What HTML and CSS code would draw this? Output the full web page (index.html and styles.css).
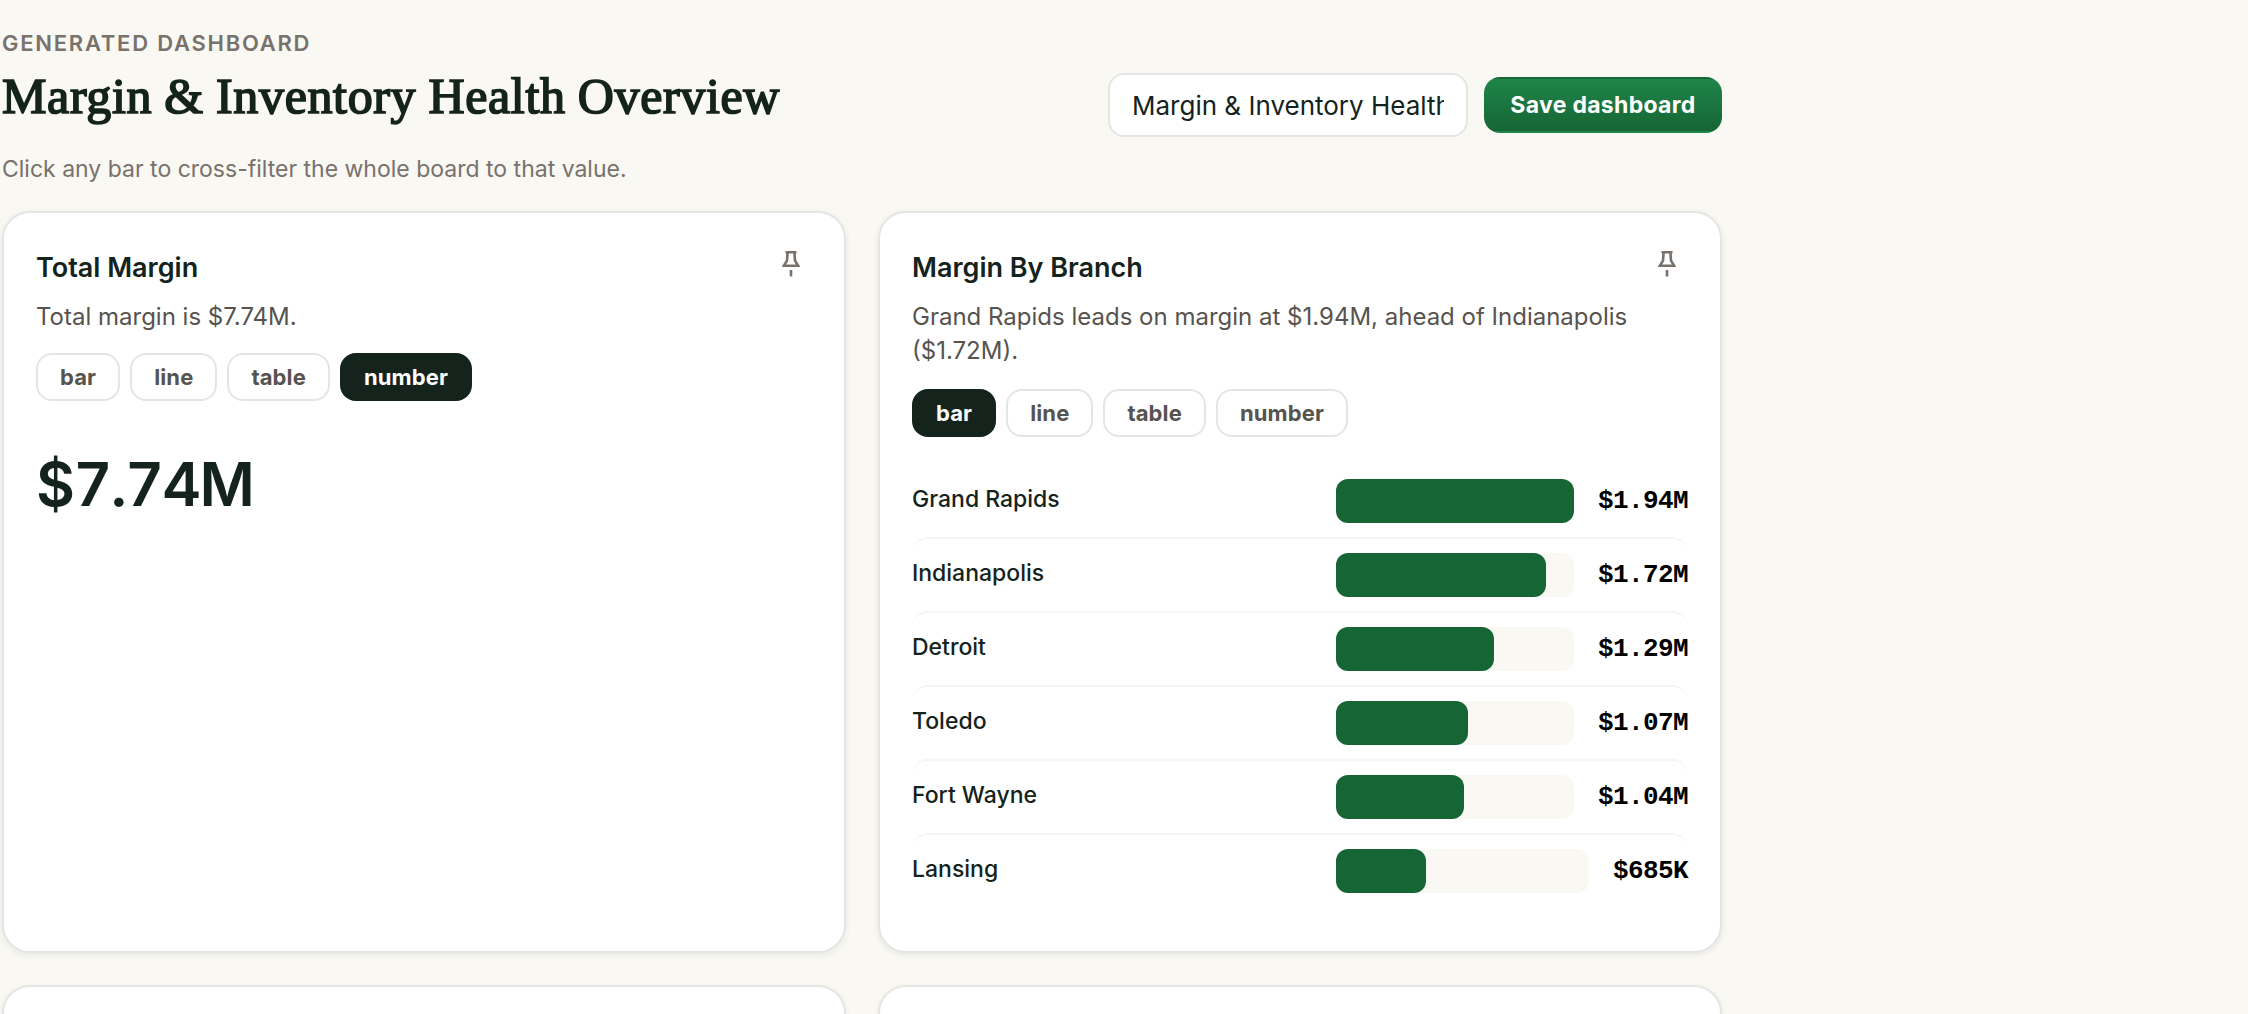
FILE: index.html
```html
<!DOCTYPE html>
<html lang="en">
<head>
<meta charset="utf-8">
<title>Margin &amp; Inventory Health Overview</title>
<link rel="stylesheet" href="styles.css">
</head>
<body>
<main class="board">
  <header class="board-head">
    <div class="intro">
      <p class="kicker">Generated dashboard</p>
      <h1 class="title">Margin &amp; Inventory Health Overview</h1>
      <p class="hint">Click any bar to cross-filter the whole board to that value.</p>
    </div>
    <div class="actions">
      <input class="name-input" type="text" value="Margin &amp; Inventory Health Overview" aria-label="Dashboard name">
      <button class="save" type="button">Save dashboard</button>
    </div>
  </header>
  <div class="cards">
    <section class="card">
      <div class="card-head">
        <h2 class="card-title">Total Margin</h2>
        <button class="pin" type="button" aria-label="Pin"><svg viewBox="0 0 18 26" width="18" height="26"><path class="pin-body" d="M3.5 1.2h11M5.6 1.2 5 9.6 1.8 14.8h14.4L13 9.6 12.4 1.2"/><path class="pin-body" d="M9 19v6.5"/></svg></button>
      </div>
      <p class="summary">Total margin is $7.74M.</p>
      <div class="chips">
        <button class="chip" type="button">bar</button>
        <button class="chip" type="button">line</button>
        <button class="chip" type="button">table</button>
        <button class="chip chip-on" type="button">number</button>
      </div>
      <p class="figure">$7.74M</p>
    </section>
    <section class="card">
      <div class="card-head">
        <h2 class="card-title">Margin By Branch</h2>
        <button class="pin" type="button" aria-label="Pin"><svg viewBox="0 0 18 26" width="18" height="26"><path class="pin-body" d="M3.5 1.2h11M5.6 1.2 5 9.6 1.8 14.8h14.4L13 9.6 12.4 1.2"/><path class="pin-body" d="M9 19v6.5"/></svg></button>
      </div>
      <p class="summary summary-long">Grand Rapids leads on margin at $1.94M, ahead of Indianapolis ($1.72M).</p>
      <div class="chips">
        <button class="chip chip-on" type="button">bar</button>
        <button class="chip" type="button">line</button>
        <button class="chip" type="button">table</button>
        <button class="chip" type="button">number</button>
      </div>
      <div class="rows">
        <div class="row"><span class="name">Grand Rapids</span><span class="measure"><span class="track"><span class="fill" style="width:100%"></span></span><span class="value">$1.94M</span></span></div>
        <div class="row"><span class="name">Indianapolis</span><span class="measure"><span class="track"><span class="fill" style="width:88.4%"></span></span><span class="value">$1.72M</span></span></div>
        <div class="row"><span class="name">Detroit</span><span class="measure"><span class="track"><span class="fill" style="width:66.4%"></span></span><span class="value">$1.29M</span></span></div>
        <div class="row"><span class="name">Toledo</span><span class="measure"><span class="track"><span class="fill" style="width:55.4%"></span></span><span class="value">$1.07M</span></span></div>
        <div class="row"><span class="name">Fort Wayne</span><span class="measure"><span class="track"><span class="fill" style="width:53.7%"></span></span><span class="value">$1.04M</span></span></div>
        <div class="row"><span class="name">Lansing</span><span class="measure"><span class="track"><span class="fill" style="width:35.4%"></span></span><span class="value">$685K</span></span></div>
      </div>
    </section>
    <section class="card card-next"></section>
    <section class="card card-next"></section>
  </div>
</main>
</body>
</html>
```
FILE: styles.css
```css
* { box-sizing: border-box; }
html { height: 100%; overflow: hidden; }
body {
  margin: 0;
  height: 100%;
  overflow: hidden;
  background: #f9f8f3;
  color: #14231b;
  font-family: Inter, "Liberation Sans", sans-serif;
}
p, h1, h2 { margin: 0; }
button, input { font-family: inherit; margin: 0; }

.board { width: 1722px; padding: 28px 0 0 2px; }
.board-head {
  display: flex;
  justify-content: space-between;
  height: 155px;
  margin-bottom: 28px;
}
.kicker {
  font-size: 22px;
  line-height: 30px;
  font-weight: 600;
  letter-spacing: 1.76px;
  text-transform: uppercase;
  color: #78716c;
}
.title {
  margin-top: 7px;
  font-family: "Liberation Serif", serif;
  font-size: 50px;
  line-height: 62px;
  font-weight: 400;
  letter-spacing: 0.65px;
  word-spacing: -1px;
  -webkit-text-stroke: 1.7px #14231b;
  white-space: nowrap;
}
.hint {
  margin-top: 25px;
  font-size: 23px;
  line-height: 34px;
  color: #78716c;
}
.actions { display: flex; align-items: center; gap: 16px; height: 154px; }
.name-input {
  width: 360px;
  height: 64px;
  padding: 0 22px;
  border: 2px solid #e5e5e3;
  border-radius: 16px;
  background: #fff;
  color: #14231b;
  font-size: 26px;
}
.save {
  width: 238px;
  height: 56px;
  padding: 0;
  border: 2px solid transparent;
  border-radius: 16px;
  background: linear-gradient(#1f8549, #166534);
  color: #fff;
  font-size: 23px;
  font-weight: 700;
  letter-spacing: 0.3px;
}

.cards {
  display: grid;
  grid-template-columns: 1fr 1fr;
  grid-template-rows: 742px auto;
  gap: 32px;
}
.card {
  padding: 32px;
  border: 2px solid #e5e5e3;
  border-radius: 28px;
  background: #fff;
  box-shadow: 0 2px 6px rgba(20, 35, 27, .08);
}
.card-next { height: 29px; padding: 0; border-bottom: 0; border-radius: 28px 28px 0 0; }
.card-head { display: flex; justify-content: space-between; height: 44px; }
.card-title { font-size: 27px; line-height: 45px; font-weight: 600; }
.pin {
  width: 44px;
  height: 44px;
  margin-right: -1px;
  padding: 6px 0 0;
  border: 0;
  background: none;
  display: flex;
  justify-content: center;
}
.pin-body { fill: none; stroke: #78716c; stroke-width: 2.6; }
.summary {
  margin-top: 11px;
  font-size: 24px;
  line-height: 34px;
  color: #57534e;
}
.summary-long { padding-bottom: 2px; }
.chips { display: flex; gap: 10px; margin-top: 19px; }
.chip {
  height: 48px;
  padding: 0 22px;
  border: 2px solid #e5e5e3;
  border-radius: 16px;
  background: #fff;
  color: #57534e;
  font-size: 22px;
  font-weight: 700;
  letter-spacing: 0.12px;
}
.chip-on { background: #14231b; border-color: #14231b; color: #fff; }
.figure {
  margin-top: 47px;
  font-size: 60px;
  line-height: 72px;
  font-weight: 600;
  font-variant-numeric: tabular-nums;
  letter-spacing: -1.6px;
}

.rows { margin-top: 26px; }
.row {
  display: grid;
  grid-template-columns: 404px 352px;
  gap: 20px;
  height: 74px;
  padding: 14px 0;
  border-top: 2px solid #f5f5f4;
  border-radius: 16px;
}
.row:first-child { border-top-color: transparent; }
.name { font-size: 23px; line-height: 40px; font-weight: 500; }
.measure { display: flex; align-items: center; gap: 24px; }
.track { flex: 1; height: 44px; border-radius: 12px; background: #f9f8f3; }
.fill { display: block; height: 44px; border-radius: 12px; background: #166534; }
.value {
  font-family: "Liberation Mono", monospace;
  font-size: 26px;
  font-weight: 700;
  letter-spacing: -0.6px;
  color: #000;
}
```
